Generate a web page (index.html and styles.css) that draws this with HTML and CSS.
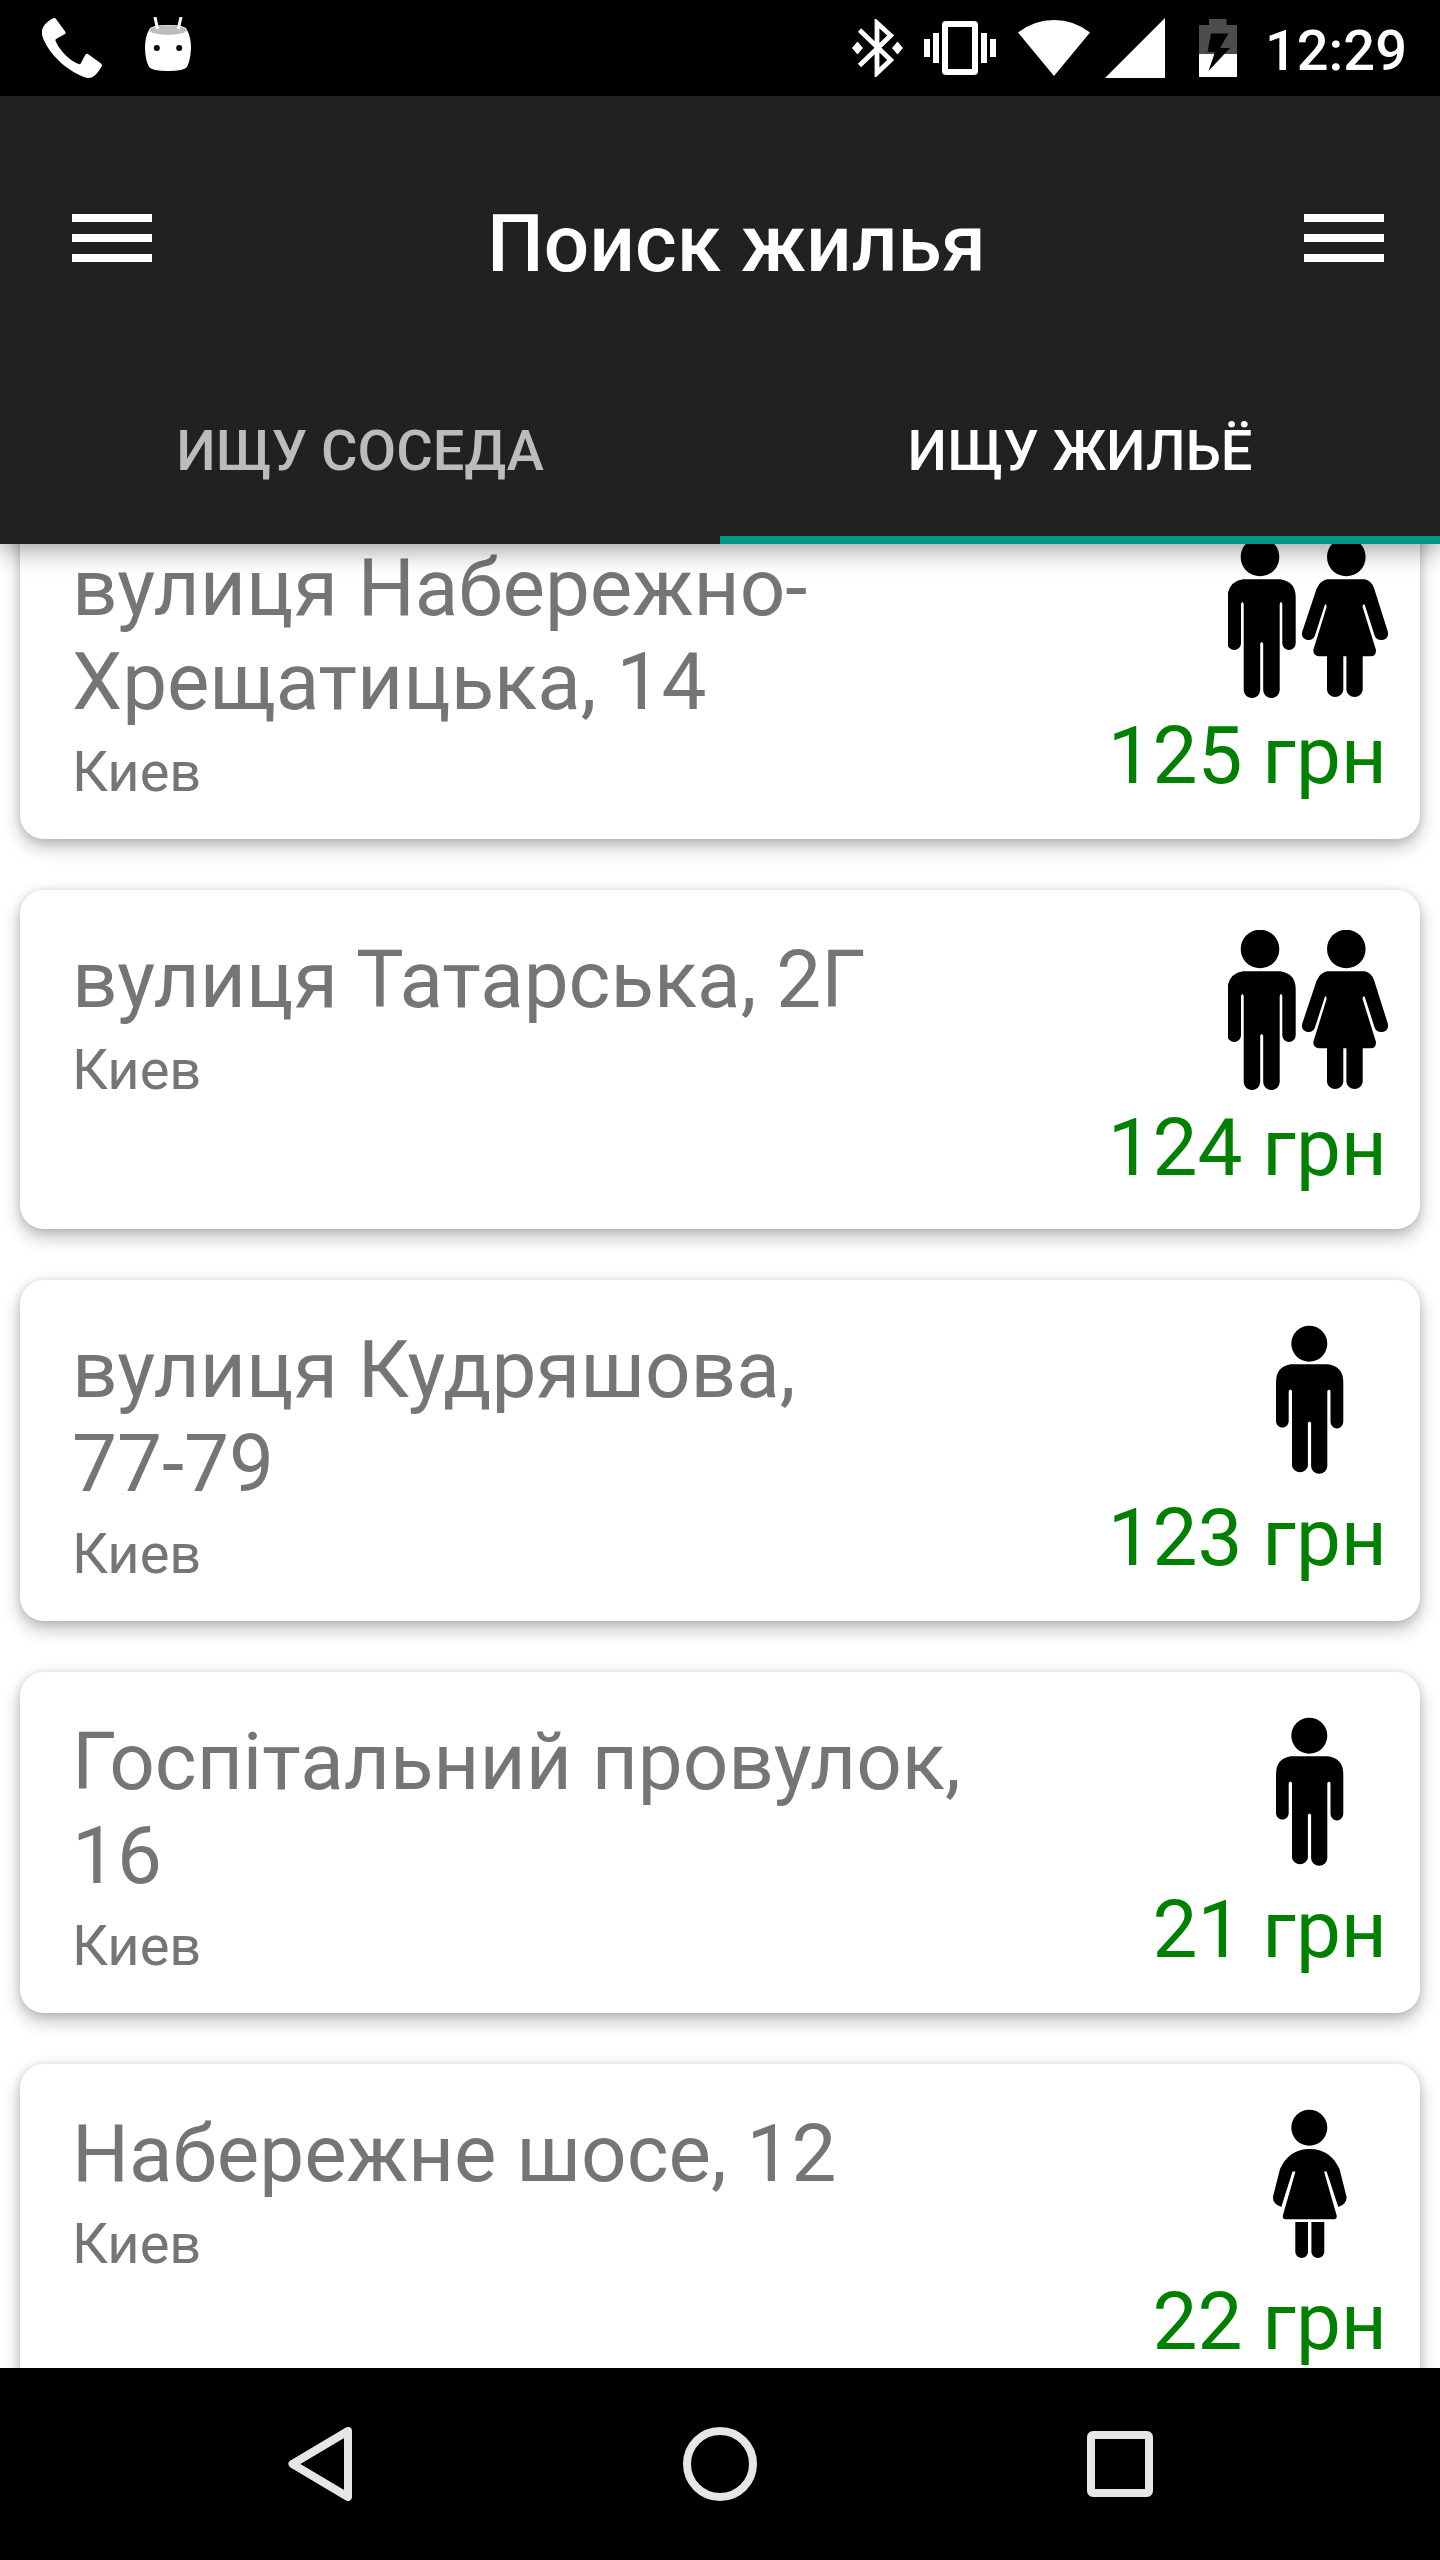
FILE: index.html
```html
<!DOCTYPE html>
<html lang="ru">
<head>
<meta charset="utf-8">
<title>Поиск жилья</title>
<link rel="stylesheet" href="styles.css">
</head>
<body>
<svg class="defs" width="0" height="0" aria-hidden="true">
  <defs>
    <symbol id="couple" viewBox="0 0 160 160">
      <circle cx="32" cy="19" r="19.3"/>
      <path d="M15 41.3H52Q67.7 43.5 67.7 59V105.300A6.700 6.700 0 0 1 54.300 105.300V66Q53 62 51.700 66V152A8.200 8 0 0 1 35.200 152V106Q33.700 102 32.200 106V152A8.200 8 0 0 1 15.700 152V66Q14.400 62 13 66V105.300A6.700 6.700 0 0 1 -.5 105.300V58Q1 43.500 15 41.300Z"/>
      <circle cx="118.300" cy="19" r="19.300"/>
      <path d="M99 41.300H137Q143.500 43 146 50L159.800 93.500Q161 100 155.500 101.800Q149 103 146.800 98L136.800 67Q134.600 65 134.600 69L148 112Q148 118.300 143 118.300H134.700V152A8.200 8 0 0 1 118.400 152V118.300H115.300V152A8.200 8 0 0 1 99 152V118.300H91Q85.500 118 85.300 112L98.600 69Q98.600 65 96.800 67L86.800 98Q84.600 103 78.500 101.800Q72.500 99.500 74.300 93.500L88.500 51Q92 43 99 41.300Z"/>
    </symbol>
    <symbol id="man" viewBox="0 0 160 160">
      <circle cx="81.300" cy="23.700" r="18"/>
      <path d="M63 44.300H100Q115.300 46.500 115.300 62V101.800A6.400 6.600 0 0 1 102.500 101.800V71Q100.900 68 99.300 71V146A8.100 7.700 0 0 1 83.100 146V103Q81.500 100 79.900 103V146A8.100 7.700 0 0 1 64 146V71Q62.300 68 60.700 71V101.800A6.400 6.600 0 0 1 48 101.800V62Q48 46.500 63 44.300Z"/>
    </symbol>
    <symbol id="woman" viewBox="0 0 160 160">
      <circle cx="81.300" cy="23.700" r="18"/>
      <path d="M81.700 45C97 45 106 53 111.500 65L118.600 93Q119 100 110.300 103L98.600 67.500H96L108.800 112Q108.800 115.300 106 115.300H57.500Q54.700 115.300 54.700 112L67.500 67.500H64.500L53.300 103Q44.500 100 44.900 93L52 65C57.500 53 66.500 45 81.700 45Z"/>
      <path d="M67.300 118H80V148A6.350 6 0 0 1 67.300 148ZM83.400 118H96.300V148A6.450 6 0 0 1 83.400 148Z"/>
    </symbol>
  </defs>
</svg>

<div class="status-bar">
  <div class="notifications">
    <svg class="icon-phone" viewBox="0 0 60 60" width="60" height="60"><path d="M12 0Q13 -.4 14 1L23.500 14Q24 15 23 16L14 21Q13 22 14 24C19 34 27 42 37 46.300Q38.500 46.600 39 45L43.500 36.500Q44.500 35.400 46 36L59 45.500Q60.500 46.500 59.600 48.500Q55 57 49.500 59.500Q46 60.500 42 59C23 51.500 6 35 .3 18Q-.8 12 1.500 8.500Q6 2 12 0Z" fill="#fff"/></svg>
    <svg class="icon-robot" viewBox="0 0 46 54" width="46" height="54">
      <path d="M4 13Q5 8 23 8Q41 8 42 13Q46 20 46 31Q45.500 43 42 50Q39 54 23 54Q7 54 4 50Q.3 43 0 31Q0 20 4 13Z" fill="#fff"/>
      <ellipse cx="23" cy="13.200" rx="18.500" ry="4.800" fill="#bdbdbd"/>
      <path d="M10 0L12.500 12M36 0L33.300 12" stroke="#fff" stroke-width="3"/>
      <circle cx="11.800" cy="31" r="3"/><circle cx="34.200" cy="31" r="3"/>
    </svg>
  </div>
  <div class="system">
    <svg class="icon-bt" viewBox="0 0 51 58" width="51" height="58">
      <path d="M7.500 11L38.700 41L25 54V4L38.700 16.500L7.500 46.500" fill="none" stroke="#fff" stroke-width="4.800"/>
      <path d="M5.500 22.500L11 29L5.500 35.500L0 29ZM45.500 22.500L51 29L45.500 35.500L40 29Z" fill="#fff"/>
    </svg>
    <svg class="icon-vibrate" viewBox="0 0 72 54" width="72" height="54">
      <path d="M0 18h6v18H0zM9 12h6v30H9zM57 12h6v30h-6zM66 18h6v18h-6z" fill="#fff"/>
      <path fill-rule="evenodd" d="M22 0H50Q54 0 54 4V50Q54 54 50 54H22Q18 54 18 50V4Q18 0 22 0ZM24 6V48H48V6Z" fill="#fff"/>
    </svg>
    <svg class="icon-wifi" viewBox="0 0 72 56" width="72" height="56"><path d="M0 12.500Q16 0 36 0Q56 0 72 12.500L36 56Z" fill="#fff"/></svg>
    <svg class="icon-signal" viewBox="0 0 60 60" width="60" height="60"><path d="M0 60H60V0Z" fill="#fff"/></svg>
    <svg class="icon-battery" viewBox="0 0 38 58" width="38" height="58">
      <path d="M0 6H10V0H27.500V6H38V35H0Z" fill="#4d4d4d"/>
      <path d="M0 35H38V58H0Z" fill="#fff"/>
      <path d="M12 14.500H29.500L21 29H31L9.500 52L16 33H8.500Z"/>
    </svg>
    <span class="clock">12:29</span>
  </div>
</div>

<header class="app-bar">
  <div class="toolbar">
    <div class="menu"><i></i><i></i><i></i></div>
    <h1 class="title">Поиск жилья</h1>
    <div class="menu"><i></i><i></i><i></i></div>
  </div>
  <nav class="tabs">
    <div class="tab">ИЩУ СОСЕДА</div>
    <div class="tab active">ИЩУ ЖИЛЬЁ</div>
  </nav>
</header>

<main class="list">
  <article class="card">
    <div class="info"><div class="address">вулиця Набережно-<br>Хрещатицька, 14</div><div class="city">Киев</div></div>
    <div class="side"><svg class="people"><use href="#couple"/></svg><div class="price">125 грн</div></div>
  </article>
  <article class="card short">
    <div class="info"><div class="address">вулиця Татарська, 2Г</div><div class="city">Киев</div></div>
    <div class="side"><svg class="people"><use href="#couple"/></svg><div class="price">124 грн</div></div>
  </article>
  <article class="card">
    <div class="info"><div class="address">вулиця Кудряшова,<br>77-79</div><div class="city">Киев</div></div>
    <div class="side"><svg class="people"><use href="#man"/></svg><div class="price">123 грн</div></div>
  </article>
  <article class="card">
    <div class="info"><div class="address">Госпітальний провулок,<br>16</div><div class="city">Киев</div></div>
    <div class="side"><svg class="people"><use href="#man"/></svg><div class="price">21 грн</div></div>
  </article>
  <article class="card">
    <div class="info"><div class="address">Набережне шосе, 12</div><div class="city">Киев</div></div>
    <div class="side"><svg class="people"><use href="#woman"/></svg><div class="price">22 грн</div></div>
  </article>
</main>

<footer class="nav-bar">
  <svg viewBox="0 0 80 80" width="80" height="80"><path d="M68 7L12.500 40L68 73Z" fill="none" stroke="#e6e6e6" stroke-width="8" stroke-linejoin="round"/></svg>
  <svg viewBox="0 0 80 80" width="80" height="80"><circle cx="40" cy="40" r="33" fill="none" stroke="#e6e6e6" stroke-width="8"/></svg>
  <svg viewBox="0 0 80 80" width="80" height="80"><rect x="11" y="11" width="58" height="58" rx="2" fill="none" stroke="#e6e6e6" stroke-width="8"/></svg>
</footer>
</body>
</html>
```
FILE: styles.css
```css
* { box-sizing: border-box; }

body {
  margin: 0;
  width: 1440px;
  height: 2560px;
  display: flex;
  flex-direction: column;
  overflow: hidden;
  background: #fff;
  font-family: Roboto, sans-serif;
}

svg { display: block; flex: none; }
.defs { position: absolute; }

/* Status bar */
.status-bar {
  flex: none;
  height: 96px;
  padding: 0 33px 0 42px;
  display: flex;
  justify-content: space-between;
  background: #000;
}
.notifications, .system { display: flex; align-items: flex-start; }
.icon-phone { margin-top: 18px; }
.icon-robot { margin: 17px 0 0 43px; }
.icon-bt { margin: 19px 21px 0 0; }
.icon-vibrate { margin: 21px 22px 0 0; }
.icon-wifi { margin: 20px 15px 0 0; }
.icon-signal { margin: 18px 34px 0 0; }
.icon-battery { margin: 19px 0 0 0; }
.clock {
  width: 170px;
  margin-top: 18px;
  text-align: right;
  font-size: 56px;
  font-weight: 500;
  line-height: 66px;
  color: #fff;
}

/* App bar */
.app-bar {
  flex: none;
  position: relative;
  z-index: 1;
  height: 448px;
  display: flex;
  flex-direction: column;
  background: #212121;
  box-shadow: 0 6px 24px rgba(0, 0, 0, .38);
}
.toolbar {
  height: 256px;
  padding: 118px 56px 0 72px;
  display: flex;
  justify-content: space-between;
  align-items: flex-start;
}
.menu { width: 80px; display: flex; flex-direction: column; gap: 12px; }
.menu i { height: 8px; background: #fff; }
.title {
  margin: -17px 0 0 17px;
  font-size: 80px;
  font-weight: 500;
  line-height: 94px;
  color: #fff;
}
.tabs { flex: 1; display: flex; }
.tab {
  flex: 1;
  padding-top: 66px;
  border-bottom: 8px solid transparent;
  text-align: center;
  font-size: 56px;
  font-weight: 500;
  line-height: 66px;
  color: #bcbcbc;
}
.tab.active { color: #fff; border-bottom-color: #009688; }

/* Listing */
.list {
  flex: 1;
  min-height: 0;
  overflow: hidden;
  padding: 0 20px;
}
.card {
  height: 341px;
  margin-bottom: 51px;
  padding: 40px 32px 0 52px;
  display: flex;
  justify-content: space-between;
  background: #fff;
  border-radius: 24px;
  box-shadow: 0 8px 18px rgba(0, 0, 0, .26), 0 1px 8px rgba(0, 0, 0, .12);
}
.card:first-child { margin-top: -46px; }
.card.short { height: 339px; }
.address {
  margin-top: 3px;
  font-size: 80px;
  line-height: 94px;
  color: #757575;
  white-space: nowrap;
}
.city {
  margin-top: 10px;
  font-size: 56px;
  line-height: 66px;
  color: #757575;
}
.side { display: flex; flex-direction: column; align-items: flex-end; }
.people { width: 160px; height: 160px; }
.price {
  margin: 11px 1px 0 0;
  font-size: 80px;
  line-height: 94px;
  color: #008000;
  white-space: nowrap;
}

/* Navigation bar */
.nav-bar {
  flex: none;
  height: 192px;
  padding: 0 280px;
  display: flex;
  justify-content: space-between;
  align-items: center;
  background: #000;
}
```
